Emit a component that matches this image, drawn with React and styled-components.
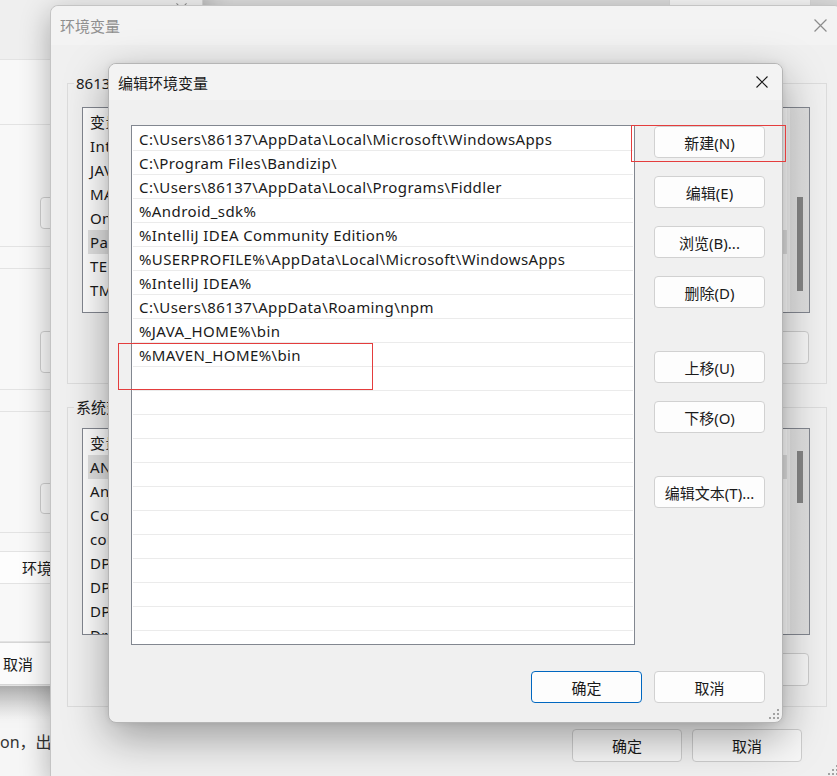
import React from "react";
import styled, { createGlobalStyle } from "styled-components";

const GlobalStyle = createGlobalStyle`
  html, body {
    margin: 0;
    padding: 0;
  }
  body {
    font-family: "Noto Sans", "Noto Sans CJK SC", sans-serif;
    background: #f3f3f3;
  }
`;

const pathEntries = [
  "C:\\Users\\86137\\AppData\\Local\\Microsoft\\WindowsApps",
  "C:\\Program Files\\Bandizip\\",
  "C:\\Users\\86137\\AppData\\Local\\Programs\\Fiddler",
  "%Android_sdk%",
  "%IntelliJ IDEA Community Edition%",
  "%USERPROFILE%\\AppData\\Local\\Microsoft\\WindowsApps",
  "%IntelliJ IDEA%",
  "C:\\Users\\86137\\AppData\\Roaming\\npm",
  "%JAVA_HOME%\\bin",
  "%MAVEN_HOME%\\bin",
];

const userVars = [
  "IntelliJ IDEA Community Edition",
  "JAVA_HOME",
  "MAVEN_HOME",
  "OneDrive",
  "Path",
  "TEMP",
  "TMP",
];

const systemVars = [
  "ANDROID_HOME",
  "Android_sdk",
  "ComSpec",
  "configsetroot",
  "DPS_HOME",
  "DPSDK",
  "DPTOOL",
  "DriverData",
];

const sysSections = [
  { h: 80, head: true },
  { h: 65 },
  { h: 122, btn: { top: 72, h: 32 } },
  { h: 22 },
  { h: 121, btn: { top: 62, h: 42 } },
  { h: 22 },
  { h: 121, btn: { top: 71, h: 31 } },
  { h: 19 },
  { h: 32, label: "环境变量(N)...", light: true },
  { h: 58 },
  { h: 44, footer: true },
];

const pathButtons = [
  { label: "新建(N)" },
  { label: "编辑(E)" },
  { label: "浏览(B)..." },
  { label: "删除(D)" },
  { label: "上移(U)", spaced: true },
  { label: "下移(O)" },
  { label: "编辑文本(T)...", spaced: true },
];

const CloseIcon = ({ size, color }) => (
  <svg width={size} height={size} viewBox="0 0 12 12">
    <path d="M0.5 0.5 L11.5 11.5 M11.5 0.5 L0.5 11.5" stroke={color} strokeWidth="1.1" fill="none" />
  </svg>
);

const ResizeGrip = () => (
  <svg width="12" height="12" viewBox="0 0 12 12">
    <g fill="#a3a3a3">
      <rect x="9" y="1" width="2" height="2" />
      <rect x="9" y="5" width="2" height="2" />
      <rect x="5" y="5" width="2" height="2" />
      <rect x="9" y="9" width="2" height="2" />
      <rect x="5" y="9" width="2" height="2" />
      <rect x="1" y="9" width="2" height="2" />
    </g>
  </svg>
);

export default function App() {
  const emptyRows = Array.from({ length: 12 });

  return (
    <>
      <GlobalStyle />
      <Desktop>
        <PageBackdrop>
          <PageText>on，出现如下版本信息即表示配置成功</PageText>
        </PageBackdrop>

        <BackWindow>
          {sysSections.map((s, i) => (
            <SysSection key={i} $h={s.h} $head={s.head} $light={s.light}>
              {s.head && (
                <BackClose>
                  <CloseIcon size={11} color="#8a8a8a" />
                </BackClose>
              )}
              {s.btn && <SysButton $top={s.btn.top} $h={s.btn.h} />}
              {s.label && <SysLabel>{s.label}</SysLabel>}
              {s.footer && (
                <SysFooter>
                  <SysFooterButton>取消</SysFooterButton>
                  <SysFooterButton>应用(A)</SysFooterButton>
                </SysFooter>
              )}
            </SysSection>
          ))}
        </BackWindow>

        <TopWindow />

        <EnvWindow>
          <EnvTitleBar>
            <EnvTitle>环境变量</EnvTitle>
            <CloseIcon size={13} color="#8c8c8c" />
          </EnvTitleBar>
          <EnvBody>
            <GroupBox $h={301}>
              <Legend>86137 的用户变量(U)</Legend>
              <VarList $top={23} $h={206}>
                <VarRows>
                  <VarRow>变量</VarRow>
                  {userVars.map((v) => (
                    <VarRow key={v} $selected={v === "Path"}>
                      {v}
                    </VarRow>
                  ))}
                </VarRows>
                <ScrollTrack>
                  <ScrollThumb $top={89} $h={94} />
                </ScrollTrack>
              </VarList>
              <GroupButtons>
                <EnvButton>新建(N)...</EnvButton>
                <EnvButton>编辑(E)...</EnvButton>
                <EnvButton>删除(D)</EnvButton>
              </GroupButtons>
            </GroupBox>

            <GroupBox $h={300} $gap={23}>
              <Legend>系统变量(S)</Legend>
              <VarList $top={20} $h={207}>
                <VarRows>
                  <VarRow>变量</VarRow>
                  {systemVars.map((v) => (
                    <VarRow key={v} $selected={v === "ANDROID_HOME"}>
                      {v}
                    </VarRow>
                  ))}
                </VarRows>
                <ScrollTrack>
                  <ScrollThumb $top={22} $h={52} />
                </ScrollTrack>
              </VarList>
              <GroupButtons>
                <EnvButton>新建(W)...</EnvButton>
                <EnvButton>编辑(I)...</EnvButton>
                <EnvButton>删除(L)</EnvButton>
              </GroupButtons>
            </GroupBox>

            <EnvFooter>
              <EnvButton>确定</EnvButton>
              <EnvButton>取消</EnvButton>
            </EnvFooter>
          </EnvBody>
          <GripCorner>
            <ResizeGrip />
          </GripCorner>
        </EnvWindow>

        <EditDialog>
          <DialogTitleBar>
            <DialogTitle>编辑环境变量</DialogTitle>
            <CloseIcon size={12} color="#1a1a1a" />
          </DialogTitleBar>
          <DialogBody>
            <DialogMain>
              <PathList>
                {pathEntries.map((p) => (
                  <PathRow key={p}>{p}</PathRow>
                ))}
                {emptyRows.map((_, i) => (
                  <PathRow key={`e${i}`} />
                ))}
              </PathList>
              <ButtonColumn>
                {pathButtons.map((b) => (
                  <DialogButton key={b.label} $spaced={b.spaced}>
                    {b.label}
                  </DialogButton>
                ))}
              </ButtonColumn>
            </DialogMain>
            <DialogFooter>
              <DialogButton $primary>确定</DialogButton>
              <DialogButton>取消</DialogButton>
            </DialogFooter>
          </DialogBody>
          <GripCorner>
            <ResizeGrip />
          </GripCorner>
        </EditDialog>

        <Annotation $x={631} $y={125} $w={155} $h={37} />
        <Annotation $x={118} $y={343} $w={255} $h={47} />
      </Desktop>
    </>
  );
}

const Desktop = styled.div`
  position: relative;
  width: 837px;
  height: 776px;
  overflow: hidden;
  background: #f4f4f4;
  color: #1a1a1a;
  font-size: 15px;
`;

const PageBackdrop = styled.div`
  padding-top: 729px;
  background: linear-gradient(to bottom, #dcdcdc 686px, #f6f6f6 720px);
  height: 776px;
  box-sizing: border-box;
`;

const PageText = styled.p`
  margin: 0;
  font-size: 16px;
  line-height: 26px;
  color: #333;
  white-space: nowrap;
`;

/* window behind everything on the left */
const BackWindow = styled.div`
  position: absolute;
  left: -160px;
  top: -20px;
  width: 362px;
  display: flex;
  flex-direction: column;
  background: #f9f9f9;
  border-right: 1px solid #d4d4d4;
  box-shadow: 0 10px 28px rgba(0, 0, 0, 0.28);
`;

const SysSection = styled.div`
  position: relative;
  height: ${(p) => p.$h}px;
  box-sizing: border-box;
  border-bottom: 1px solid #e3e3e3;
  background: ${(p) => (p.$head ? "#efefef" : p.$light ? "#fdfdfd" : "#f8f8f8")};
  display: flex;
  justify-content: flex-end;
  align-items: flex-start;
  padding-right: 12px;
`;

const BackClose = styled.div`
  margin-top: 18px;
  margin-right: 3px;
`;

const SysButton = styled.div`
  margin-top: ${(p) => p.$top}px;
  width: 150px;
  height: ${(p) => p.$h}px;
  box-sizing: border-box;
  border: 1px solid #d0d0d0;
  border-radius: 4px;
  background: #fbfbfb;
`;

const SysLabel = styled.div`
  align-self: center;
  width: 352px;
  padding-left: 182px;
  box-sizing: border-box;
  white-space: nowrap;
`;

const SysFooter = styled.div`
  display: flex;
  gap: 10px;
  height: 100%;
`;

const SysFooterButton = styled.div`
  width: 108px;
  height: 100%;
  box-sizing: border-box;
  border: 1px solid #d6d6d6;
  background: #fbfbfb;
  display: flex;
  align-items: center;
  justify-content: center;
`;

const TopWindow = styled.div`
  position: absolute;
  left: 669px;
  top: -40px;
  width: 142px;
  height: 46px;
  box-sizing: border-box;
  border: 1px solid #d8d8d8;
  background: #f7f7f7;
`;

/* 环境变量 window */
const EnvWindow = styled.div`
  position: absolute;
  left: 50px;
  top: 5px;
  width: 792px;
  height: 774px;
  box-sizing: border-box;
  display: flex;
  flex-direction: column;
  background: #f0f0f0;
  border: 1px solid #c4c4c4;
  border-radius: 8px 8px 0 0;
  box-shadow: 0 8px 30px rgba(0, 0, 0, 0.3);
`;

const EnvTitleBar = styled.div`
  height: 39px;
  flex-shrink: 0;
  display: flex;
  align-items: center;
  justify-content: space-between;
  padding: 0 14px 0 9px;
  background: #f3f3f3;
  border-radius: 8px 8px 0 0;
`;

const EnvTitle = styled.span`
  color: #8f8f8f;
  font-size: 15px;
`;

const EnvBody = styled.div`
  display: flex;
  flex-direction: column;
  padding: 38px 14px 0 16px;
`;

const GroupBox = styled.div`
  position: relative;
  height: ${(p) => p.$h}px;
  margin-top: ${(p) => p.$gap || 0}px;
  box-sizing: border-box;
  border: 1px solid #dcdcdc;
  padding: 0 16px 0 14px;
  display: flex;
  flex-direction: column;
`;

const Legend = styled.span`
  position: absolute;
  left: 6px;
  top: -12px;
  padding: 0 2px;
  background: #f0f0f0;
  line-height: 22px;
  white-space: nowrap;
`;

const VarList = styled.div`
  margin-top: ${(p) => p.$top}px;
  height: ${(p) => p.$h}px;
  box-sizing: border-box;
  border: 1px solid #838790;
  background: #fff;
  display: flex;
  overflow: hidden;
`;

const VarRows = styled.div`
  flex: 1;
  padding-top: 2px;
  padding-left: 5px;
`;

const VarRow = styled.div`
  height: 24px;
  line-height: 24px;
  padding-left: 2px;
  letter-spacing: 0.4px;
  white-space: nowrap;
  background: ${(p) => (p.$selected ? "#e2e2e2" : "transparent")};
`;

const ScrollTrack = styled.div`
  width: 22px;
  flex-shrink: 0;
  background: linear-gradient(to right, #f4f4f4 0 3px, #e6e6e6 3px, #dedede);
  display: flex;
  justify-content: center;
`;

const ScrollThumb = styled.div`
  width: 6px;
  height: ${(p) => p.$h}px;
  margin-top: ${(p) => p.$top}px;
  margin-left: 4px;
  background: #868686;
`;

const GroupButtons = styled.div`
  margin-top: 18px;
  display: flex;
  justify-content: flex-end;
  gap: 10px;
  padding-right: 1px;
`;

const EnvButton = styled.div`
  width: 110px;
  height: 33px;
  box-sizing: border-box;
  border: 1px solid #cdcdcd;
  border-radius: 4px;
  background: #f7f7f7;
  display: flex;
  align-items: center;
  justify-content: center;
`;

const EnvFooter = styled.div`
  margin-top: 22px;
  display: flex;
  justify-content: flex-end;
  gap: 10px;
  padding-right: 25px;
`;

const GripCorner = styled.div`
  position: absolute;
  right: 2px;
  bottom: 2px;
  line-height: 0;
`;

/* 编辑环境变量 dialog */
const EditDialog = styled.div`
  position: absolute;
  left: 108px;
  top: 63px;
  width: 675px;
  height: 660px;
  box-sizing: border-box;
  border: 1px solid #b5b5b5;
  border-radius: 8px;
  background: #f0f0f0;
  box-shadow: 0 14px 44px rgba(0, 0, 0, 0.36), 0 0 6px rgba(0, 0, 0, 0.08);
  overflow: hidden;
`;

const DialogTitleBar = styled.div`
  height: 36px;
  display: flex;
  align-items: center;
  justify-content: space-between;
  padding: 0 14px 0 9px;
  background: #f3f3f3;
`;

const DialogTitle = styled.span`
  font-size: 15px;
  color: #1a1a1a;
`;

const DialogBody = styled.div`
  padding: 25px 17px 19px 22px;
  display: flex;
  flex-direction: column;
`;

const DialogMain = styled.div`
  display: flex;
  gap: 19px;
  align-items: flex-start;
`;

const PathList = styled.div`
  width: 504px;
  height: 520px;
  box-sizing: border-box;
  border: 1px solid #828790;
  background: #fff;
  padding: 1px 1px 0;
  overflow: hidden;
`;

const PathRow = styled.div`
  height: 24px;
  box-sizing: border-box;
  border-bottom: 1px solid #ebebeb;
  padding-left: 6px;
  line-height: 24px;
  letter-spacing: 0.4px;
  white-space: nowrap;
`;

const ButtonColumn = styled.div`
  display: flex;
  flex-direction: column;
  gap: 18px;
  padding-top: 1px;
`;

const DialogButton = styled.div`
  width: 111px;
  height: 32px;
  box-sizing: border-box;
  margin-top: ${(p) => (p.$spaced ? 25 : 0)}px;
  border: 1px solid ${(p) => (p.$primary ? "#0067c0" : "#d1d1d1")};
  border-radius: 4px;
  background: #fdfdfd;
  display: flex;
  align-items: center;
  justify-content: center;
  white-space: nowrap;
  color: #1a1a1a;
`;

const DialogFooter = styled.div`
  margin-top: 26px;
  display: flex;
  justify-content: flex-end;
  gap: 12px;
`;

/* red marks drawn over the screenshot */
const Annotation = styled.div`
  position: absolute;
  left: ${(p) => p.$x}px;
  top: ${(p) => p.$y}px;
  width: ${(p) => p.$w}px;
  height: ${(p) => p.$h}px;
  box-sizing: border-box;
  border: 1px solid #e43d3d;
  pointer-events: none;
`;
